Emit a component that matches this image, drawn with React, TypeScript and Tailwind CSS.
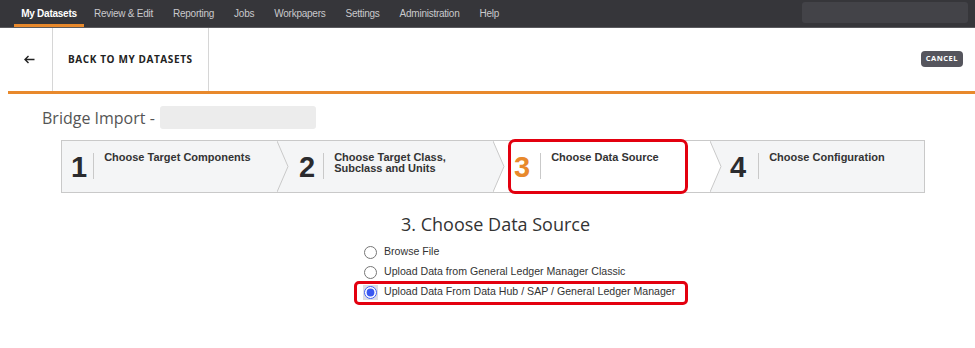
import React from "react";

const NAV = ["My Datasets", "Review & Edit", "Reporting", "Jobs", "Workpapers", "Settings", "Administration", "Help"];

const STEPS = [
  { n: "1", label: ["Choose Target Components"], w: "w-[215px]", pad: "pl-[9px]", gap: "ml-[6px]" },
  { n: "2", label: ["Choose Target Class,", "Subclass and Units"], w: "w-[216px]", pad: "pl-[22px]", gap: "ml-[8px]" },
  { n: "3", label: ["Choose Data Source"], w: "w-[217px]", pad: "pl-[21px]", gap: "ml-[10px]", active: true },
  { n: "4", label: ["Choose Configuration"], w: "flex-1", pad: "pl-[20px]", gap: "ml-[12px]" },
];

const SOURCES = [
  "Browse File",
  "Upload Data from General Ledger Manager Classic",
  "Upload Data From Data Hub / SAP / General Ledger Manager",
];

function Chevron({ fill }: { fill: string }) {
  return (
    <svg className="absolute left-0 top-0" width="12" height="51" viewBox="0 0 12 51" aria-hidden>
      <polygon points="0,0 11,25.5 0,51" fill={fill} />
      <polyline points="0,0 11,25.5 0,51" fill="none" stroke="#c9c9c9" strokeWidth="1" />
    </svg>
  );
}

export default function App() {
  return (
    <div className="w-[975px] h-[348px] bg-white overflow-hidden font-['Open_Sans',sans-serif]">
      {/* top nav */}
      <header className="h-[28px] bg-[#36363a] border-b border-[#5a5a5e] flex items-stretch">
        <nav className="flex pl-[14px]">
          {NAV.map((item, i) => (
            <div
              key={item}
              className={`flex items-center text-[10px] tracking-[-0.25px] font-['Liberation_Sans',sans-serif] ${
                i === 0
                  ? "w-[70px] justify-center text-white font-bold border-b-[3px] border-[#e8892c] pt-[3px]"
                  : "px-[10px] text-[#c9c9cc]"
              }`}
            >
              {item}
            </div>
          ))}
        </nav>
        <div className="ml-auto mr-[7px] mt-[2px] w-[166px] h-[21px] rounded-[3px] bg-[#434348]" />
      </header>

      {/* back bar */}
      <div className="h-[63px] flex items-stretch">
        <div className="w-[53px] border-r border-[#d6d6d6] flex items-center justify-center pl-[7px] text-[#222]">
          <svg width="11" height="9" viewBox="0 0 11 9" aria-hidden>
            <path d="M10.5 4.5H1M4.5 1L1 4.5L4.5 8" fill="none" stroke="#222" strokeWidth="1.4" />
          </svg>
        </div>
        <div className="w-[156px] border-r border-[#d6d6d6] flex items-center pl-[15px] text-[10px] font-bold tracking-[0.6px] text-[#222]">
          BACK TO MY DATASETS
        </div>
        <div className="flex-1 flex items-center justify-end pr-[12px] pb-[1px]">
          <span className="h-[16px] px-[5px] rounded-[4px] bg-[#55555d] text-white text-[7.5px] font-bold tracking-[0.5px] flex items-center">
            CANCEL
          </span>
        </div>
      </div>
      <div className="ml-[8px] h-[3px] bg-[#e8892c]" />

      {/* title */}
      <div className="flex items-center pl-[42px] mt-[12px] h-[23px]">
        <span className="text-[16px] text-[#555]">Bridge Import -</span>
        <span className="ml-[5px] w-[156px] h-[23px] rounded-[3px] bg-[#ececec]" />
      </div>

      {/* stepper */}
      <div className="relative ml-[61px] mt-[11px] w-[864px] h-[53px] border border-[#c9c9c9] bg-[#f4f5f6] flex">
        {STEPS.map((s, i) => (
          <div
            key={s.n}
            className={`relative shrink-0 ${s.w} ${s.pad} flex items-start pt-[12px] ${s.active ? "bg-white" : ""}`}
          >
            {i > 0 && <Chevron fill={STEPS[i - 1].active ? "#ffffff" : "#f4f5f6"} />}
            <span
              className={`text-[29px] leading-[29px] font-bold font-['Liberation_Sans',sans-serif] ${
                s.active ? "text-[#e8892c]" : "text-[#2b2b2e]"
              }`}
            >
              {s.n}
            </span>
            <span className={`${s.gap} h-[26px] border-l border-[#c9c9c9]`} />
            <div className="ml-[10px] -mt-[1px] text-[11px] leading-[11px] font-bold text-[#333] font-['Liberation_Sans',sans-serif]">
              {s.label.map((l) => (
                <div key={l}>{l}</div>
              ))}
            </div>
          </div>
        ))}
        <div className="absolute left-[446px] top-[-2px] w-[180px] h-[55px] rounded-[7px] border-[3px] border-[#e3000f]" />
      </div>

      {/* data source */}
      <div className="mt-[20px] pl-[401px] text-[18px] leading-[22px] text-[#333]">3. Choose Data Source</div>
      <div className="relative mt-[10px] pl-[364px] flex flex-col gap-[6px] font-['Liberation_Sans',sans-serif] text-[10.6px] text-[#333]">
        {SOURCES.map((s, i) => (
          <label key={s} className="flex items-center h-[14px]">
            <span className={`w-[15px] h-[15px] -ml-[1px] flex items-center justify-center ${i === 2 ? "bg-[#dcdce4]" : ""}`}>
              <input
                type="radio"
                name="src"
                defaultChecked={i === 2}
                className="m-0 w-[13px] h-[13px] accent-[#3a58f0]"
              />
            </span>
            <span className="ml-[6px]">{s}</span>
          </label>
        ))}
        <div className="absolute left-[354px] top-[36px] w-[334px] h-[24px] rounded-[5px] border-[3px] border-[#e3000f]" />
      </div>
    </div>
  );
}
